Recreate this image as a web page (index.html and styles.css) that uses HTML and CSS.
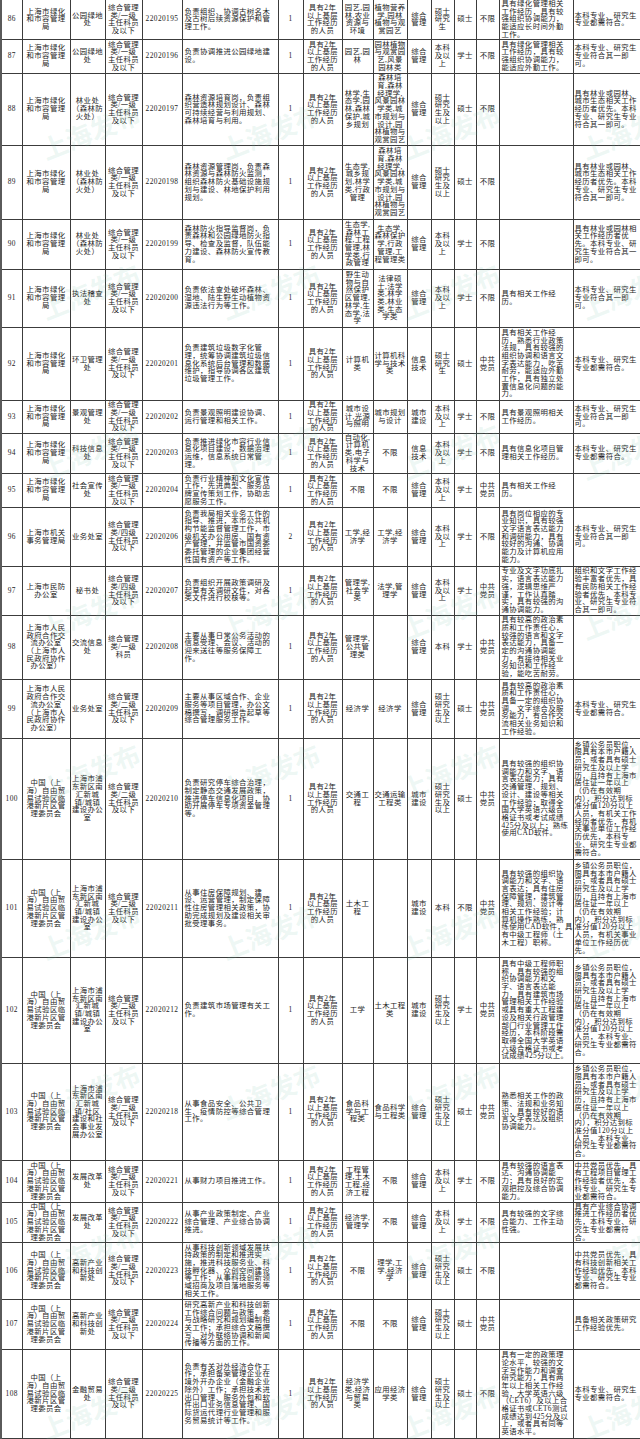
FILE: index.html
```html
<!DOCTYPE html>
<html lang="zh-CN">
<head>
<meta charset="utf-8">
<title>职位表</title>
<link rel="stylesheet" href="styles.css">
</head>
<body>
<div class="page">
<table class="grid">
<colgroup>
<col class="c1"><col class="c2"><col class="c3"><col class="c4"><col class="c5"><col class="c6"><col class="c7"><col class="c8"><col class="c9"><col class="c10"><col class="c11"><col class="c12"><col class="c13"><col class="c14"><col class="c15"><col class="c16">
</colgroup>
<tbody>
<tr class="r86 first">
<td>86</td><td>上海市绿化<br>和市容管理<br>局</td><td>公园绿地<br>处</td><td>综合管理<br>类/一级<br>主任科员<br>及以下</td><td>22020195</td>
<td class="l">负责组织、协调古树名木<br>及古树后续资源保护和管<br>理工作。</td><td>1</td><td>具有2年<br>以上基层<br>工作经历<br>的人员</td>
<td>园艺,园<br>林,农业<br>资源与<br>环境</td><td>植物营养<br>学,园林<br>植物与观<br>赏园艺</td><td>综合<br>管理</td><td>硕士<br>研究<br>生</td><td>硕士</td><td>不限</td>
<td class="l">具有绿化管理相关<br>工作经历，具有较<br>强组织协调能力，<br>能适应长时间外勤<br>工作。</td><td class="l">本科专业、研究生<br>专业都需符合。</td>
</tr>
<tr class="r87">
<td>87</td><td>上海市绿化<br>和市容管理<br>局</td><td>公园绿地<br>处</td><td>综合管理<br>类/一级<br>主任科员<br>及以下</td><td>22020196</td>
<td class="l">负责协调推进公园绿地建<br>设。</td><td>1</td><td>具有2年<br>以上基层<br>工作经历<br>的人员</td>
<td>园艺,园<br>林</td><td>园林植物<br>与观赏园<br>艺,风景<br>园林类</td><td>综合<br>管理</td><td>本科<br>及以<br>上</td><td>学士</td><td>不限</td>
<td class="l">具有绿化管理相关<br>工作经历，具有较<br>强组织协调能力，<br>能适应外勤工作。</td><td class="l">本科专业、研究生<br>专业符合其一即<br>可。</td>
</tr>
<tr class="r88">
<td>88</td><td>上海市绿化<br>和市容管理<br>局</td><td>林业处<br>（森林防<br>火处）</td><td>综合管理<br>类/一级<br>主任科员<br>及以下</td><td>22020197</td>
<td class="l">森林资源培育岗，负责组<br>织营造林规划设计、森林<br>可持续经营与利用规划、<br>森林培育与利用。</td><td>1</td><td>具有2年<br>以上基层<br>工作经历<br>的人员</td>
<td>林学,生<br>态学,园<br>林,森林<br>保护,城<br>乡规划</td><td>森林培<br>育,森林<br>经理学,<br>风景园林<br>学类,城<br>市规划与<br>设计,园<br>林植物与<br>观赏园艺</td><td>综合<br>管理</td><td>硕士<br>研究<br>生及<br>以上</td><td>硕士</td><td>不限</td>
<td class="l"></td><td class="l">具有林业或园林、<br>城市生态相关工作<br>经历者优先。本科<br>专业、研究生专业<br>符合其一即可。</td>
</tr>
<tr class="r89">
<td>89</td><td>上海市绿化<br>和市容管理<br>局</td><td>林业处<br>（森林防<br>火处）</td><td>综合管理<br>类/一级<br>主任科员<br>及以下</td><td>22020198</td>
<td class="l">森林资源管理岗，负责森<br>林资源与森林防火监测，<br>组织森林防火基础设施规<br>划与建设、林地保护利用<br>规划。</td><td>1</td><td>具有2年<br>以上基层<br>工作经历<br>的人员</td>
<td>生态学,<br>城乡规<br>划,林学<br>类,行政<br>管理</td><td>森林培<br>育,森林<br>经理学,<br>风景园林<br>学类,城<br>市规划与<br>设计,园<br>林植物与<br>观赏园艺</td><td>综合<br>管理</td><td>硕士<br>研究<br>生及<br>以上</td><td>硕士</td><td>不限</td>
<td class="l"></td><td class="l">具有林业或园林、<br>城市生态相关工作<br>经历者优先。本科<br>专业、研究生专业<br>符合其一即可。</td>
</tr>
<tr class="r90">
<td>90</td><td>上海市绿化<br>和市容管理<br>局</td><td>林业处<br>（森林防<br>火处）</td><td>综合管理<br>类/一级<br>主任科员<br>及以下</td><td>22020199</td>
<td class="l">森林防火指导监督岗，负<br>责森林和公园绿地防火指<br>导、检查及监督，队伍能<br>力建设、森林防火宣传教<br>育。</td><td>1</td><td>具有2年<br>以上基层<br>工作经历<br>的人员</td>
<td>生态学,<br>森林工<br>程,工程<br>管理,林<br>学类,行<br>政管理</td><td>生态学,<br>森林保护<br>学,行政<br>管理,工<br>程管理类</td><td>综合<br>管理</td><td>本科<br>及以<br>上</td><td>学士</td><td>不限</td>
<td class="l"></td><td class="l">具有林业或园林相<br>关工作经历者优<br>先。本科专业、研<br>究生专业符合其一<br>即可。</td>
</tr>
<tr class="r91">
<td>91</td><td>上海市绿化<br>和市容管理<br>局</td><td>执法稽查<br>处</td><td>综合管理<br>类/一级<br>主任科员<br>及以下</td><td>22020200</td>
<td class="l">负责依法查处破坏森林、<br>湿地、陆生野生动植物资<br>源违法行为等工作。</td><td>1</td><td>具有2年<br>以上基层<br>工作经历<br>的人员</td>
<td>野生动<br>物与自<br>然保护<br>区管理,<br>林学,生<br>态学,法<br>学</td><td>法律硕<br>士,法学<br>类,林学<br>类,林业<br>类,生态<br>学类</td><td>综合<br>管理</td><td>本科<br>及以<br>上</td><td>学士</td><td>不限</td>
<td class="l">具有相关工作经<br>历。</td><td class="l">本科专业、研究生<br>专业符合其一即<br>可。</td>
</tr>
<tr class="r92">
<td>92</td><td>上海市绿化<br>和市容管理<br>局</td><td>环卫管理<br>处</td><td>综合管理<br>类/一级<br>主任科员<br>及以下</td><td>22020201</td>
<td class="l">负责建筑垃圾数字化管<br>理，统筹协调建筑垃圾信<br>息化系统后台管理和数据<br>维护，指导协调各区建筑<br>垃圾管理工作。</td><td>1</td><td>具有2年<br>以上基层<br>工作经历<br>的人员</td>
<td>计算机<br>类</td><td>计算机科<br>学与技术<br>类</td><td>信息<br>技术</td><td>硕士<br>研究<br>生</td><td>硕士</td><td>中共<br>党员</td>
<td class="l">具有相关工作经<br>历，熟悉行业政策<br>法规，具有较强的<br>组织协调和语言文<br>字表达能力，吃苦<br>耐劳，能适应外勤<br>工作，具有独立处<br>置信息化问题的能<br>力。</td><td class="l">本科专业、研究生<br>专业都需符合。</td>
</tr>
<tr class="r93">
<td>93</td><td>上海市绿化<br>和市容管理<br>局</td><td>景观管理<br>处</td><td>综合管理<br>类/一级<br>主任科员<br>及以下</td><td>22020202</td>
<td class="l">负责景观照明建设协调、<br>运行管理和相关工作。</td><td>1</td><td>具有2年<br>以上基层<br>工作经历<br>的人员</td>
<td>城市设<br>计,光源<br>与照明</td><td>城市规划<br>与设计</td><td>城市<br>建设</td><td>本科<br>及以<br>上</td><td>学士</td><td>不限</td>
<td class="l">具有景观照明相关<br>工作经历。</td><td class="l">本科专业、研究生<br>专业符合其一即<br>可。</td>
</tr>
<tr class="r94">
<td>94</td><td>上海市绿化<br>和市容管理<br>局</td><td>科技信息<br>处</td><td>综合管理<br>类/一级<br>主任科员<br>及以下</td><td>22020203</td>
<td class="l">负责推进绿化市容行业信<br>息化项目建设，数据治理<br>运维，信息系统日常管<br>理。</td><td>1</td><td>具有2年<br>以上基层<br>工作经历<br>的人员</td>
<td>自动化,<br>计算机<br>类,电子<br>科学与<br>技术</td><td>不限</td><td>信息<br>技术</td><td>本科<br>及以<br>上</td><td>学士</td><td>不限</td>
<td class="l">具有信息化项目管<br>理相关工作经历。</td><td class="l">本科专业、研究生<br>专业都需符合。</td>
</tr>
<tr class="r95">
<td>95</td><td>上海市绿化<br>和市容管理<br>局</td><td>社会宣传<br>处</td><td>综合管理<br>类/一级<br>主任科员<br>及以下</td><td>22020204</td>
<td class="l">负责行业精神和文化宣传<br>工作，先进典型、服务品<br>牌宣传策划工作，协助志<br>愿服务工作。</td><td>1</td><td>具有2年<br>以上基层<br>工作经历<br>的人员</td>
<td>不限</td><td>不限</td><td>综合<br>管理</td><td>本科<br>及以<br>上</td><td>学士</td><td>中共<br>党员</td>
<td class="l">具有相关工作经<br>历。</td><td class="l"></td>
</tr>
<tr class="r96">
<td>96</td><td>上海市机关<br>事务管理局</td><td>业务处室</td><td>综合管理<br>类/四级<br>主任科员<br>及以下</td><td>22020206</td>
<td class="l">负责我局相关业务工作的<br>指导、推进，本市公共机<br>构节能监督管理工作，市<br>级机关办公用房、国有资<br>产管理，并监管市国资委<br>委托管理的企业集团经营<br>性国有资产等工作。</td><td>2</td><td>具有2年<br>以上基层<br>工作经历<br>的人员</td>
<td>工学,经<br>济学</td><td>工学,经<br>济学</td><td>综合<br>管理</td><td>本科<br>及以<br>上</td><td>学士</td><td>不限</td>
<td class="l">具有岗位相应的专<br>业知识，具有较强<br>文字语言表达能力<br>和调研能力，具有<br>较好的沟通、协调<br>能力及计算机应用<br>能力。</td><td class="l">本科专业、研究生<br>专业符合其一即<br>可。</td>
</tr>
<tr class="r97">
<td>97</td><td>上海市民防<br>办公室</td><td>秘书处</td><td>综合管理<br>类/四级<br>主任科员<br>及以下</td><td>22020207</td>
<td class="l">负责组织开展政策调研及<br>起草有关调研文件，对各<br>类文件进行校核等。</td><td>1</td><td>具有2年<br>以上基层<br>工作经历<br>的人员</td>
<td>管理学,<br>社会学<br>类</td><td>法学,管<br>理学</td><td>综合<br>管理</td><td>本科<br>及以<br>上</td><td>学士</td><td>中共<br>党员</td>
<td class="l">专业及文字功底扎<br>实，语言表达能力<br>强，逻辑思维严<br>谨，工作认真踏<br>实，具有较强的沟<br>通协调能力。</td><td class="l">组织和文字工作经<br>验丰富者优先，具<br>有民防相关工作经<br>验者优先，本科专<br>业、研究生专业符<br>合其一即可。</td>
</tr>
<tr class="r98">
<td>98</td><td>上海市人民<br>政府合作交<br>流办公室<br>（上海市人<br>民政府协作<br>办公室）</td><td>交流信息<br>处</td><td>综合管理<br>类/一级<br>科员</td><td>22020208</td>
<td class="l">主要从事日常公务活动的<br>信息受理、会议、活动的<br>迎来送往等服务保障工<br>作。</td><td>1</td><td>具有2年<br>以上基层<br>工作经历<br>的人员</td>
<td>管理学,<br>公共管<br>理类</td><td></td><td>综合<br>管理</td><td>本科</td><td>学士</td><td>中共<br>党员</td>
<td class="l">具有较高的政治素<br>质和工作责任心，<br>较强的语言和文字<br>表达能力，具备一<br>定的沟通协调能<br>力，有接待相关业<br>务知识和工作经<br>验，能吃苦耐劳。</td><td class="l"></td>
</tr>
<tr class="r99">
<td>99</td><td>上海市人民<br>政府合作交<br>流办公室<br>（上海市人<br>民政府协作<br>办公室）</td><td>业务处室</td><td>综合管理<br>类/二级<br>主任科员<br>及以下</td><td>22020209</td>
<td class="l">主要从事区域合作、企业<br>服务等项目管理，办公文<br>稿撰写，调研报告起草等<br>综合管理服务工作。</td><td>1</td><td>具有2年<br>以上基层<br>工作经历<br>的人员</td>
<td>经济学</td><td>经济学</td><td>综合<br>管理</td><td>硕士<br>研究<br>生及<br>以上</td><td>硕士</td><td>中共<br>党员</td>
<td class="l">具有较高的政治素<br>质和工作责任心，<br>具备一定的组织协<br>调、文字综合及服<br>务能力，有合作交<br>流相关业务知识和<br>工作经验。</td><td class="l">本科专业、研究生<br>专业都需符合。</td>
</tr>
<tr class="r100">
<td>100</td><td>中国（上<br>海）自由贸<br>易试验区临<br>港新片区管<br>理委员会</td><td>上海市浦<br>东新区南<br>汇新城<br>镇/城镇<br>建设办公<br>室</td><td>综合管理<br>类/二级<br>主任科员<br>及以下</td><td>22020210</td>
<td class="l">负责研究停车综合治理，<br>制定静态交通发展政策，<br>推进停车信息化项目，协<br>助开展停车专项资金管理<br>等。</td><td>1</td><td>具有2年<br>以上基层<br>工作经历<br>的人员</td>
<td>交通工<br>程</td><td>交通运输<br>工程类</td><td>城市<br>建设</td><td>硕士<br>研究<br>生及<br>以上</td><td>硕士</td><td>中共<br>党员</td>
<td class="l">具有较强的组织协<br>调能力和文字、语<br>言表达能力；具有<br>交通管理、规划、<br>设计、建设等相关<br>工作经验；取得全<br>国大学英语六级合<br>格证书或考试成绩<br>425分及以上；熟练<br>使用CAD软件。</td><td class="l">乡镇公务员职位，<br>限具有本市户籍人<br>员；或者具有硕士<br>研究生及以上学<br>历，且持有上海市<br>居住证一年以上<br>（仍在有效期<br>内），积分达到标<br>准分值120分以上<br>人员，有机关工作<br>经历者优先，有机<br>关事业单位工作经<br>历优先，本科专<br>业、研究生专业都<br>需符合。</td>
</tr>
<tr class="r101">
<td>101</td><td>中国（上<br>海）自由贸<br>易试验区临<br>港新片区管<br>理委员会</td><td>上海市浦<br>东新区南<br>汇新城<br>镇/城镇<br>建设办公<br>室</td><td>综合管理<br>类/二级<br>主任科员<br>及以下</td><td>22020211</td>
<td class="l">从事住房保障规划、建<br>设、运营管理，制定保障<br>性住房管理相关政策，协<br>助完成规划及建设相关审<br>批受理事务。</td><td>1</td><td>具有2年<br>以上基层<br>工作经历<br>的人员</td>
<td>土木工<br>程</td><td></td><td>城市<br>建设</td><td>本科</td><td>不限</td><td>中共<br>党员</td>
<td class="l">具有较强的组织协<br>调能力和文字、语<br>言表达；具有住房<br>保障管理，建筑管<br>理、规划、设计等<br>相关工作经验；计<br>算机操作熟练，熟<br>练使用CAD软件，具<br>有中级工程师（土<br>木工程）职称。</td><td class="l">乡镇公务员职位，<br>限具有本市户籍人<br>员；或者具有硕士<br>研究生及以上学<br>历，且持有上海市<br>居住证一年以上<br>（仍在有效期<br>内），积分达到标<br>准分值120分以上<br>人员，有机关事业<br>单位工作经历优<br>先。</td>
</tr>
<tr class="r102">
<td>102</td><td>中国（上<br>海）自由贸<br>易试验区临<br>港新片区管<br>理委员会</td><td>上海市浦<br>东新区南<br>汇新城<br>镇/城镇<br>建设办公<br>室</td><td>综合管理<br>类/二级<br>主任科员<br>及以下</td><td>22020212</td>
<td class="l">负责建筑市场管理有关工<br>作。</td><td>1</td><td>具有2年<br>以上基层<br>工作经历<br>的人员</td>
<td>工学</td><td>土木工程<br>类</td><td>城市<br>建设</td><td>硕士<br>研究<br>生及<br>以上</td><td>学士</td><td>中共<br>党员</td>
<td class="l">具有中级工程师职<br>称，具有较强的组<br>织协调能力和文<br>字、语言表达能<br>力，具有建筑市场<br>管理相关工作经验<br>或具有重大工程建<br>设及相关行政管理<br>部门行业管理工作<br>经历，本科阶段需<br>取得全国大学英语<br>六级合格证书或考<br>试成绩425分以上。</td><td class="l">乡镇公务员职位，<br>限具有本市户籍人<br>员；或者具有硕士<br>研究生及以上学<br>历，且持有上海市<br>居住证一年以上<br>（仍在有效期<br>内），积分达到标<br>准分值120分以上<br>人员，本科专业、<br>研究生专业都需符<br>合。</td>
</tr>
<tr class="r103">
<td>103</td><td>中国（上<br>海）自由贸<br>易试验区临<br>港新片区管<br>理委员会</td><td>上海市浦<br>东新区南<br>汇新城<br>镇/社区<br>建设和社<br>会事业发<br>展办公室</td><td>综合管理<br>类/二级<br>主任科员<br>及以下</td><td>22020218</td>
<td class="l">从事食品安全、公共卫<br>生、疫情防控等综合管理<br>工作。</td><td>1</td><td>具有2年<br>以上基层<br>工作经历<br>的人员</td>
<td>食品科<br>学与工<br>程类</td><td>食品科学<br>与工程类</td><td>综合<br>管理</td><td>硕士<br>研究<br>生及<br>以上</td><td>硕士</td><td>中共<br>党员</td>
<td class="l">熟悉相关工作的政<br>策、法规和业务知<br>识，具有较好的语<br>言文字表达及组织<br>协调能力。</td><td class="l">乡镇公务员职位，<br>限具有本市户籍人<br>员；或者具有硕士<br>研究生及以上学<br>历，且持有上海市<br>居住证一年以上<br>（仍在有效期<br>内），积分达到标<br>准分值120分以上<br>人员，本科专业、<br>研究生专业都需符<br>合。</td>
</tr>
<tr class="r104">
<td>104</td><td>中国（上<br>海）自由贸<br>易试验区临<br>港新片区管<br>理委员会</td><td>发展改革<br>处</td><td>综合管理<br>类/二级<br>主任科员<br>及以下</td><td>22020221</td>
<td class="l">从事财力项目推进工作。</td><td>1</td><td>具有2年<br>以上基层<br>工作经历<br>的人员</td>
<td>工程管<br>理,土木<br>工程,经<br>济工程</td><td>不限</td><td>综合<br>管理</td><td>本科<br>及以<br>上</td><td>学士</td><td>不限</td>
<td class="l">具有较强的语言表<br>达、沟通协调能<br>力；具有良好的宏<br>观把控及综合协调<br>能力。</td><td class="l">中共党员优先，具<br>有工程项目管理工<br>作经验者优先，本<br>科专业、研究生专<br>业都需符合。</td>
</tr>
<tr class="r105">
<td>105</td><td>中国（上<br>海）自由贸<br>易试验区临<br>港新片区管<br>理委员会</td><td>发展改革<br>处</td><td>综合管理<br>类/二级<br>主任科员<br>及以下</td><td>22020222</td>
<td class="l">从事产业政策制定、产业<br>综合管理、产业综合协调<br>推进。</td><td>1</td><td>具有2年<br>以上基层<br>工作经历<br>的人员</td>
<td>经济学,<br>管理学</td><td>不限</td><td>综合<br>管理</td><td>本科<br>及以<br>上</td><td>学士</td><td>不限</td>
<td class="l">具有较强的文字综<br>合能力、工作主动<br>性强。</td><td class="l">具有产业综合协调<br>推进工作经历者优<br>先，本科专业、研<br>究生专业都需符<br>合。</td>
</tr>
<tr class="r106">
<td>106</td><td>中国（上<br>海）自由贸<br>易试验区临<br>港新片区管<br>理委员会</td><td>高新产业<br>和科技创<br>新处</td><td>综合管理<br>类/二级<br>主任科员<br>及以下</td><td>22020223</td>
<td class="l">从事科技创新领域发展扶<br>持政策的制定和推进实<br>施，推进科技服务业、科<br>技孵化器、众创空间建设<br>等工作；从事科技创新领<br>域招商及项目落地服务等<br>相关工作。</td><td>1</td><td>具有2年<br>以上基层<br>工作经历<br>的人员</td>
<td>不限</td><td>理学,工<br>学,经济<br>学</td><td>综合<br>管理</td><td>硕士<br>研究<br>生及<br>以上</td><td>硕士</td><td>不限</td>
<td class="l"></td><td class="l">中共党员优先，具<br>有科技创新相关工<br>作经验优先，本科<br>专业、研究生专业<br>都需符合。</td>
</tr>
<tr class="r107">
<td>107</td><td>中国（上<br>海）自由贸<br>易试验区临<br>港新片区管<br>理委员会</td><td>高新产业<br>和科技创<br>新处</td><td>综合管理<br>类/二级<br>主任科员<br>及以下</td><td>22020224</td>
<td class="l">研究高新产业和科技创新<br>工作综合问题与政策，参<br>与战略研究和规划编制相<br>关工作；承担综合文稿撰<br>写、对外联络协调和新闻<br>传播等方面的工作。</td><td>1</td><td>具有2年<br>以上基层<br>工作经历<br>的人员</td>
<td>不限</td><td>不限</td><td>综合<br>管理</td><td>硕士<br>研究<br>生及<br>以上</td><td>硕士</td><td>中共<br>党员</td>
<td class="l"></td><td class="l">具备相关政策研究<br>工作经验优先。</td>
</tr>
<tr class="r108">
<td>108</td><td>中国（上<br>海）自由贸<br>易试验区临<br>港新片区管<br>理委员会</td><td>金融贸易<br>处</td><td>综合管理<br>类/二级<br>主任科员<br>及以下</td><td>22020225</td>
<td class="l">负责有关对外经济合作工<br>作，承担备案管理企业在<br>境外开办企业（金融企业<br>除外）工作；承担技术进<br>出口管理、服务外包和软<br>件出口业务信息管理、国<br>际货运代理行业管理和服<br>务贸易统计等工作。</td><td>1</td><td>具有2年<br>以上基层<br>工作经历<br>的人员</td>
<td>经济学<br>类,经济<br>与贸易<br>类</td><td>应用经济<br>学类</td><td>综合<br>管理</td><td>硕士<br>研究<br>生及<br>以上</td><td>硕士</td><td>不限</td>
<td class="l">具有一定的政策理<br>论水平，较强的文<br>字写作能力和调查<br>研究能力，具有两<br>年以上相关工作经<br>验，大学英语六级<br>（CET6）及以上合<br>格证书或CET6测试<br>成绩达到425分及以<br>上，或者具有同等<br>英语水平。</td><td class="l">本科专业、研究生<br>专业都需符合。</td>
</tr>
</tbody>
</table>
<div class="wm" aria-hidden="true">
<span>上海发布</span><span>上海发布</span><span>上海发布</span><span>上海发布</span>
<span>上海发布</span><span>上海发布</span><span>上海发布</span><span>上海发布</span>
<span>上海发布</span><span>上海发布</span><span>上海发布</span><span>上海发布</span>
<span>上海发布</span><span>上海发布</span><span>上海发布</span><span>上海发布</span>
<span>上海发布</span><span>上海发布</span><span>上海发布</span><span>上海发布</span>
<span>上海发布</span><span>上海发布</span><span>上海发布</span><span>上海发布</span>
<span>上海发布</span><span>上海发布</span><span>上海发布</span><span>上海发布</span>
<span>上海发布</span><span>上海发布</span><span>上海发布</span><span>上海发布</span>
<span>上海发布</span><span>上海发布</span><span>上海发布</span><span>上海发布</span>
</div>
</div>
</body>
</html>
```
FILE: styles.css
```css
* { box-sizing: border-box; }
html, body { margin: 0; padding: 0; background: #fff; }

.page {
  position: relative;
  width: 640px;
  height: 1439px;
  overflow: hidden;
  background: #fff;
}

.grid {
  border-collapse: collapse;
  table-layout: fixed;
  width: 640px;
  font-family: "Liberation Serif", "Noto Sans CJK SC", serif;
  font-size: 7.4px;
  letter-spacing: 0.4px;
  line-height: 7.7px;
  color: #1c1c1c;
}

.grid td {
  border: 1px solid #3c3c3c;
  padding: 0;
  text-align: center;
  vertical-align: middle;
  white-space: nowrap;
  overflow: hidden;
}

.grid td.l { text-align: left; padding-left: 2px; }
.grid td:first-child { border-left: 2px solid #5a5a5a; }
.grid td:last-child { border-right: 2px solid #5a5a5a; padding-left: 1px; }
.grid tr.first td { border-top: none; }

.c1 { width: 21px; }
.c2 { width: 48px; }
.c3 { width: 35px; }
.c4 { width: 37px; }
.c5 { width: 40px; }
.c6 { width: 96px; }
.c7 { width: 25px; }
.c8 { width: 39px; }
.c9 { width: 31px; }
.c10 { width: 34px; }
.c11 { width: 24px; }
.c12 { width: 23px; }
.c13 { width: 22px; }
.c14 { width: 23px; }
.c15 { width: 74px; }
.c16 { width: 68px; }

.r86 { height: 38px; }
.r87 { height: 34px; }
.r88 { height: 72px; }
.r89 { height: 74px; }
.r90 { height: 50px; }
.r91 { height: 58px; }
.r92 { height: 73px; }
.r93 { height: 33px; }
.r94 { height: 40px; }
.r95 { height: 34px; }
.r96 { height: 59px; }
.r97 { height: 49px; }
.r98 { height: 64px; }
.r99 { height: 59px; }
.r100 { height: 121px; }
.r101 { height: 98px; }
.r102 { height: 106px; }
.r103 { height: 97px; }
.r104 { height: 42px; }
.r105 { height: 40px; }
.r106 { height: 57px; }
.r107 { height: 50px; }
.r108 { height: 89px; }

.wm {
  position: absolute;
  left: 0;
  top: 0;
  width: 720px;
  height: 1439px;
  display: grid;
  grid-template-columns: repeat(4, 180px);
  grid-auto-rows: 160px;
  padding-top: 50px;
  pointer-events: none;
}

.wm span {
  display: flex;
  align-items: center;
  justify-content: center;
  font-family: "Noto Sans CJK SC", sans-serif;
  font-size: 26px;
  font-weight: 700;
  color: rgba(120, 195, 170, 0.14);
  transform: rotate(-22deg);
}
```
